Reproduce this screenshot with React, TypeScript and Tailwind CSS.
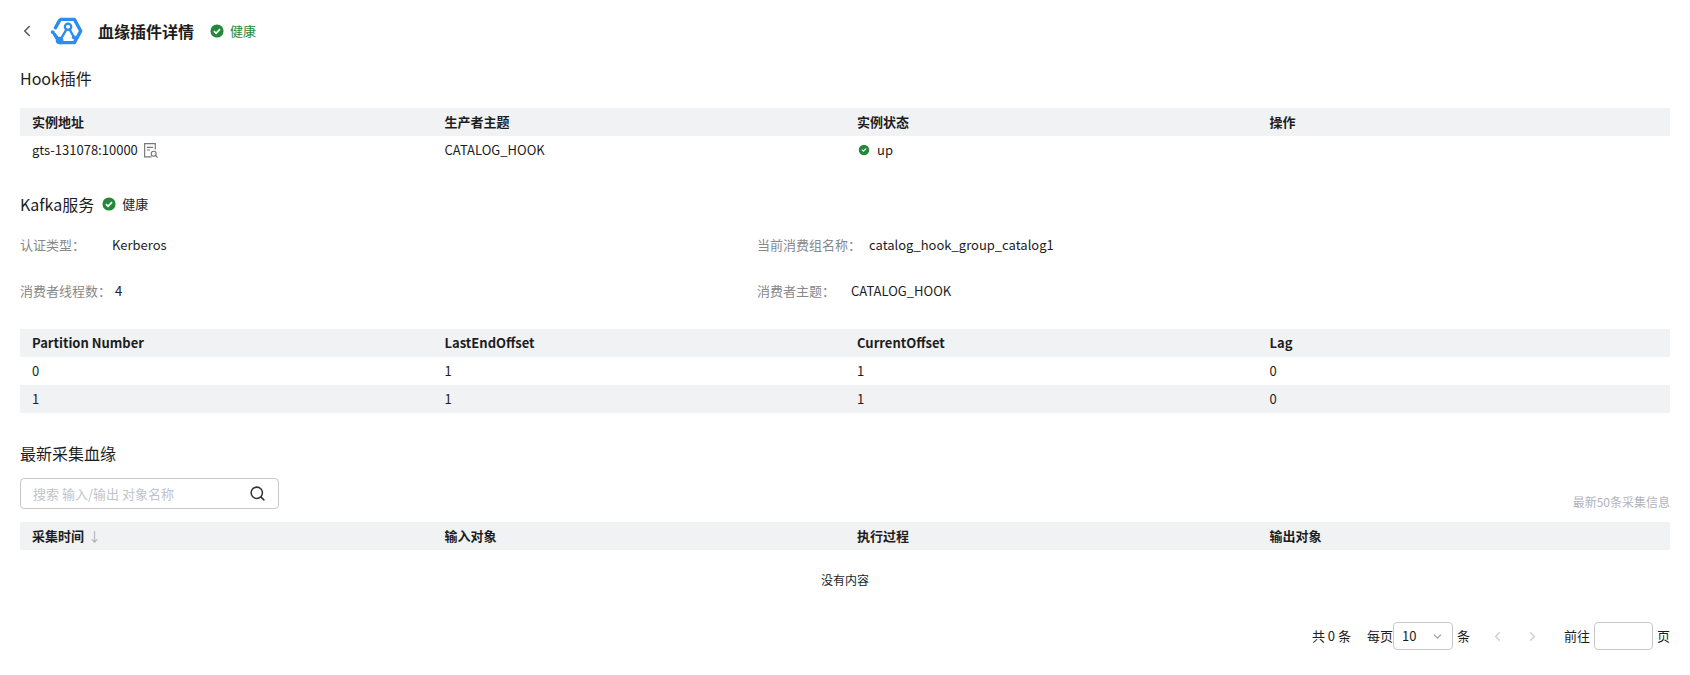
import { ChevronLeft, ChevronRight, ChevronDown, Search, CircleCheck } from "lucide-react";

const FONT = { fontFamily: '"Noto Sans CJK SC", "Noto Sans", sans-serif' };

function Healthy({ dark }: { dark?: boolean }) {
  return (
    <span className="inline-flex items-center gap-1.5 text-[13px]">
      <svg width="14" height="14" viewBox="0 0 16 16">
        <circle cx="8" cy="8" r="7.5" fill="#23883a" />
        <path d="M4.5 8.2l2.4 2.4 4.6-4.8" stroke="#fff" strokeWidth="2" fill="none" />
      </svg>
      <span className={dark ? "text-[#1d1d1d]" : "text-[#23883a]"}>健康</span>
    </span>
  );
}

function Logo() {
  return (
    <svg width="38" height="38" viewBox="0 0 36 36" fill="none">
      <path d="M11 8 L7 15 M6 21 L11 29 L25 29 L31 18 L25 7 L12 7" stroke="#2d8cf0" strokeWidth="3.2" strokeLinecap="round" strokeLinejoin="round" />
      <circle cx="19" cy="14" r="3" stroke="#2d8cf0" strokeWidth="2.2" />
      <path d="M17.5 16.5 L12 26 M20.5 16.5 L24 23" stroke="#2d8cf0" strokeWidth="2.2" strokeLinecap="round" />
      <circle cx="24.5" cy="24" r="2" fill="#2d8cf0" />
      <circle cx="11" cy="27" r="3.6" fill="#2d8cf0" />
      <path d="M4 19 L9 24" stroke="#2d8cf0" strokeWidth="2" strokeLinecap="round" />
      <circle cx="4.5" cy="19" r="1.8" fill="#2d8cf0" />
    </svg>
  );
}

function Table({ head, rows, striped }: { head: React.ReactNode[]; rows: React.ReactNode[][]; striped?: boolean }) {
  return (
    <div className="text-[13px] text-[#1d1d1d]">
      <div className="grid h-[28px] grid-cols-4 items-center bg-[#f1f2f4] font-bold">
        {head.map((h, i) => (
          <div key={i} className="px-3">{h}</div>
        ))}
      </div>
      {rows.map((r, ri) => (
        <div key={ri} className={`grid h-[28px] grid-cols-4 items-center ${striped && ri % 2 === 1 ? "bg-[#f1f2f4]" : ""}`}>
          {r.map((c, ci) => (
            <div key={ci} className="px-3">{c}</div>
          ))}
        </div>
      ))}
    </div>
  );
}

export default function App() {
  return (
    <div style={FONT} className="min-h-[675px] w-full bg-white px-5 text-[#1d1d1d]">
      <div className="flex h-[58px] items-center gap-2 pt-1">
        <ChevronLeft size={18} className="text-[#555] -ml-0.5" />
        <div className="ml-1"><Logo /></div>
        <h1 className="ml-1 text-[16px] font-bold">血缘插件详情</h1>
        <div className="ml-2"><Healthy /></div>
      </div>

      <h2 className="mt-2 text-[16px]">Hook插件</h2>
      <div className="mt-[18px]">
        <Table
          head={["实例地址", "生产者主题", "实例状态", "操作"]}
          rows={[[
            <span className="flex items-center gap-1">gts-131078:10000
              <svg width="17" height="17" viewBox="0 0 16 16" fill="none" stroke="#777" strokeWidth="1.1">
                <path d="M9 14H2.5V1.5h10V7" />
                <path d="M4.5 5h6M4.5 7.5h3" />
                <circle cx="11" cy="11" r="2.3" />
                <path d="M12.7 12.7l2 2" />
              </svg>
            </span>,
            "CATALOG_HOOK",
            <span className="flex items-center gap-1.5"><CircleCheck size={14} fill="#23883a" stroke="#fff" />up</span>,
            "",
          ]]}
        />
      </div>

      <div className="mt-[28px] flex items-center gap-2">
        <h2 className="text-[16px]">Kafka服务</h2>
        <Healthy dark />
      </div>

      <div className="mt-[6px] grid grid-cols-[737px_1fr] text-[13px]">
        <div className="flex h-[46px] items-center"><span className="w-[92px] text-[#888]">认证类型：</span>Kerberos</div>
        <div className="flex h-[46px] items-center"><span className="mr-2 text-[#888]">当前消费组名称：</span>catalog_hook_group_catalog1</div>
        <div className="flex h-[46px] items-center"><span className="mr-1 text-[#888]">消费者线程数：</span>4</div>
        <div className="flex h-[46px] items-center"><span className="mr-4 text-[#888]">消费者主题：</span>CATALOG_HOOK</div>
      </div>

      <div className="mt-[15px]">
        <Table
          striped
          head={["Partition Number", "LastEndOffset", "CurrentOffset", "Lag"]}
          rows={[["0", "1", "1", "0"], ["1", "1", "1", "0"]]}
        />
      </div>

      <h2 className="mt-[28px] text-[16px]">最新采集血缘</h2>
      <div className="mt-[13px] flex items-end justify-between">
        <div className="flex h-[31px] w-[259px] items-center justify-between rounded border border-[#c8c9cc] px-3 text-[13px]">
          <span className="text-[#c0c4cc]">搜索 输入/输出 对象名称</span>
          <Search size={17} strokeWidth={2.2} className="text-[#333]" />
        </div>
        <span className="mb-[-2px] text-[12px] text-[#b0b3b8]">最新50条采集信息</span>
      </div>
      <div className="mt-[13px]">
        <Table
          head={[<span className="flex items-center gap-1">采集时间<span className="text-[#aaa] font-normal">↓</span></span>, "输入对象", "执行过程", "输出对象"]}
          rows={[]}
        />
        <div className="flex h-[60px] items-center justify-center text-[12px]">没有内容</div>
      </div>

      <div className="mt-[12px] flex items-center justify-end gap-2 text-[13px]">
        <span>共 0 条</span>
        <span className="ml-2">每页</span>
        <div className="-ml-2 flex h-[28px] w-[60px] items-center justify-between rounded border border-[#c8c9cc] px-2">
          <span>10</span>
          <ChevronDown size={13} className="text-[#999]" />
        </div>
        <span className="-ml-1">条</span>
        <ChevronLeft size={15} className="ml-3 text-[#ccc]" />
        <ChevronRight size={15} className="ml-3 text-[#ccc]" />
        <span className="ml-4">前往</span>
        <div className="-ml-1 h-[28px] w-[59px] rounded border border-[#c8c9cc]" />
        <span className="-ml-1">页</span>
      </div>
    </div>
  );
}
